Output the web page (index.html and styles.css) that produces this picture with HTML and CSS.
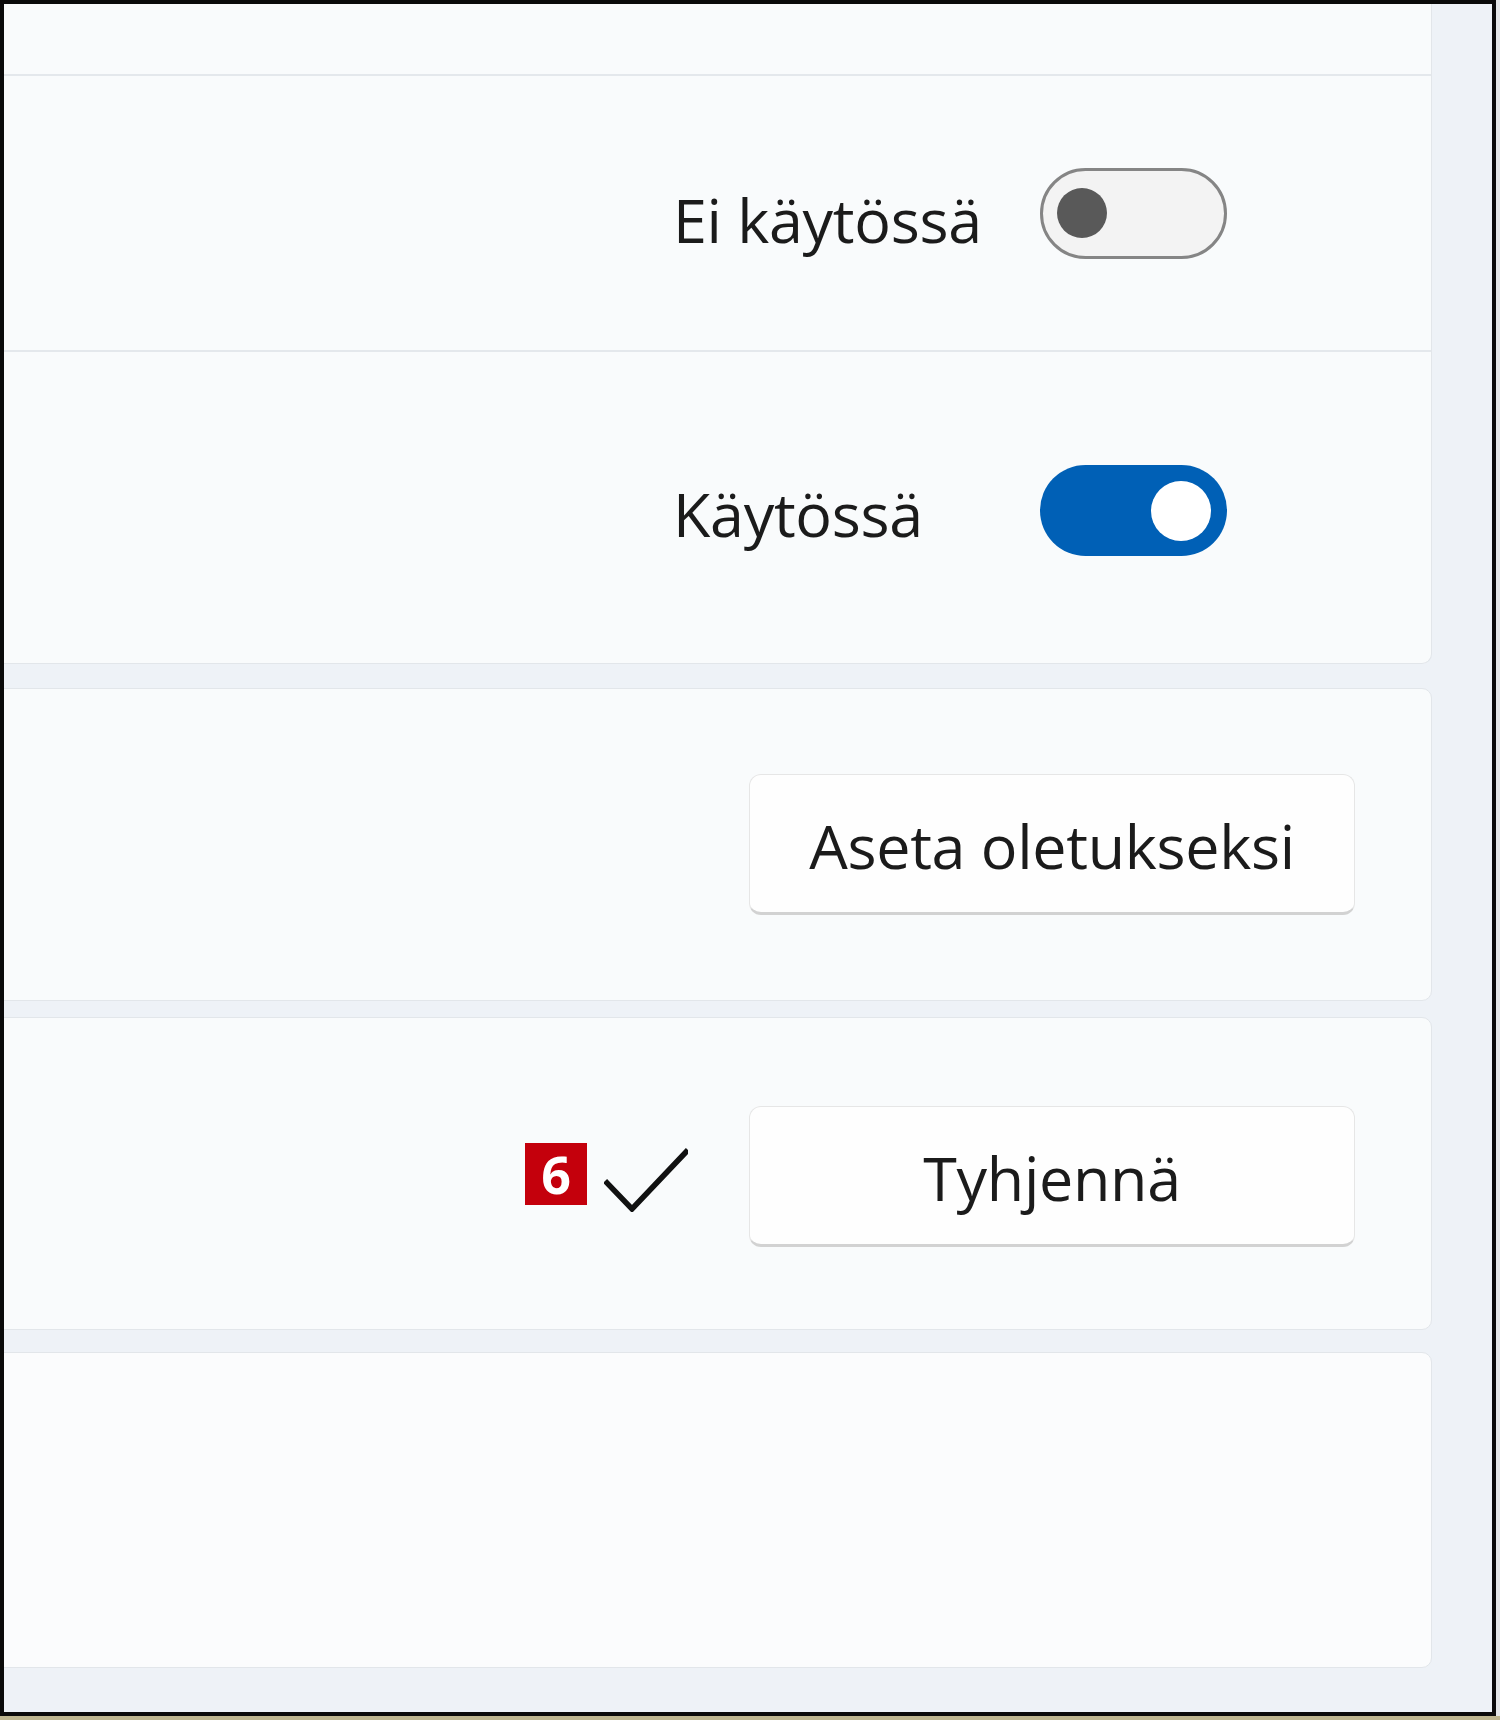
FILE: index.html
```html
<!DOCTYPE html>
<html lang="fi">
<head>
<meta charset="utf-8">
<title>Asetukset</title>
<link rel="stylesheet" href="styles.css">
</head>
<body>
<div class="window">
  <div class="content">
    <section class="card card-first">
      <div class="row row-top"></div>
      <div class="row row-toggle row-b">
        <div class="toggle-group">
          <span class="label">Ei käytössä</span>
          <span class="toggle toggle-off"><span class="knob"></span></span>
        </div>
      </div>
      <div class="row row-toggle row-c">
        <div class="toggle-group">
          <span class="label">Käytössä</span>
          <span class="toggle toggle-on"><span class="knob"></span></span>
        </div>
      </div>
    </section>

    <section class="card card-2">
      <div class="row row-button">
        <button class="btn">Aseta oletukseksi</button>
      </div>
    </section>

    <section class="card card-3">
      <div class="row row-button">
        <span class="badge">6</span>
        <svg class="check" viewBox="0 0 84 64" width="84" height="64" aria-hidden="true">
          <path d="M3 35 L28 61 L82 4" fill="none" stroke="#111" stroke-width="5.5" stroke-linecap="square" stroke-linejoin="miter"/>
        </svg>
        <button class="btn btn-clear">Tyhjennä</button>
      </div>
    </section>

    <section class="card card-4"></section>
  </div>
</div>
</body>
</html>
```

FILE: styles.css
```css
* {
  box-sizing: border-box;
}

html, body {
  margin: 0;
  padding: 0;
}

body {
  width: 1500px;
  height: 1720px;
  background: #bdb58f;
  font-family: "Open Sans", "Noto Sans", "Liberation Sans", sans-serif;
  color: #1b1b1b;
  overflow: hidden;
}

.window {
  width: 1496px;
  height: 1716px;
  border: 4px solid #0a0a0a;
  background: #eef2f7;
  box-shadow: 4px 0 0 #e4e6e8;
  overflow: hidden;
}

.content {
  display: flex;
  flex-direction: column;
  padding: 0 60px 0 0;
  margin-left: -10px;
}

.card {
  background: #f9fbfc;
  border: 1.5px solid #e2e6ea;
  border-radius: 10px;
}

.card-first {
  border-top: none;
  border-radius: 0 0 10px 0;
  height: 660px;
}

.card-2 {
  margin-top: 24px;
  height: 313px;
}

.card-3 {
  margin-top: 16px;
  height: 313px;
}

.card-4 {
  margin-top: 22px;
  height: 316px;
  background: #fbfcfd;
}

.row {
  display: flex;
  align-items: center;
  justify-content: flex-end;
}

.row-top {
  height: 72px;
  border-bottom: 2.5px solid #e4e8ec;
}

.row-b {
  height: 276px;
  border-bottom: 2.5px solid #e4e8ec;
}

.row-c {
  height: 309px;
}

.row-toggle {
  padding-right: 204px;
}

.row-c .toggle-group {
  margin-top: 8px;
}

.toggle-group {
  width: 554px;
  display: flex;
  align-items: center;
  justify-content: space-between;
}

.label {
  font-size: 61px;
  line-height: 1;
  letter-spacing: -0.3px;
  padding-top: 13px;
}

.row-c .label {
  padding-top: 5px;
}

.toggle {
  width: 187px;
  height: 91px;
  border-radius: 46px;
  display: flex;
  align-items: center;
}

.toggle-off {
  background: #f3f3f3;
  border: 3.5px solid #858585;
  padding-left: 14px;
}

.toggle-off .knob {
  width: 50px;
  height: 50px;
  border-radius: 50%;
  background: #595959;
}

.toggle-on {
  background: #0060b6;
  justify-content: flex-end;
  padding-right: 16px;
}

.toggle-on .knob {
  width: 60px;
  height: 60px;
  border-radius: 50%;
  background: #ffffff;
}

.row-button {
  height: 100%;
  padding-right: 76px;
}

.btn {
  width: 606px;
  height: 141px;
  background: #fefefe;
  border: 1.5px solid #e6e6e6;
  border-bottom: 3px solid #d2d2d2;
  border-radius: 12px;
  font-family: "Open Sans", "Noto Sans", "Liberation Sans", sans-serif;
  font-size: 61px;
  letter-spacing: -0.3px;
  color: #1b1b1b;
  padding: 4px 0 0;
}

.btn-clear {
  margin-top: 6px;
}

.badge {
  width: 62px;
  height: 62px;
  background: #c4000c;
  color: #ffffff;
  font-family: "Open Sans", "Liberation Sans", sans-serif;
  font-weight: 700;
  font-size: 52px;
  line-height: 62px;
  text-align: center;
}

.check {
  margin-left: 17px;
  margin-right: 61px;
  margin-top: 12px;
  display: block;
}
```
